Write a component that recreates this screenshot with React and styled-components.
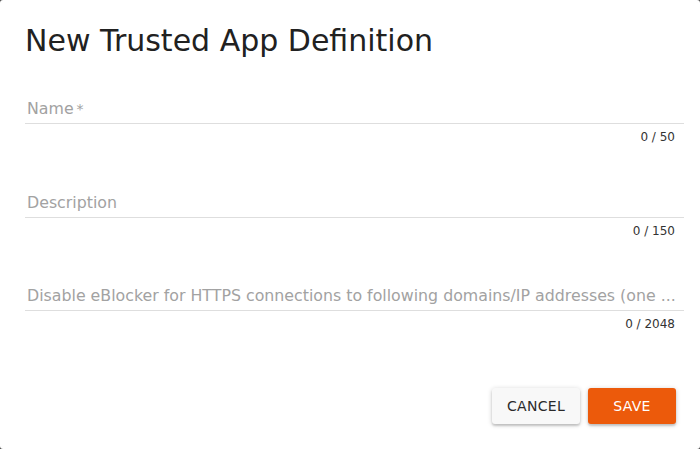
import styled, { createGlobalStyle } from "styled-components";

const GlobalStyle = createGlobalStyle`
  html, body {
    margin: 0;
    padding: 0;
    background: #4a4a4a;
  }
  body {
    font-family: "DejaVu Sans", sans-serif;
  }
`;

const fields = [
  { label: "Name", required: true, max: 50 },
  { label: "Description", max: 150 },
  {
    label:
      "Disable eBlocker for HTTPS connections to following domains/IP addresses (one ...",
    max: 2048,
  },
];

const App = () => (
  <>
    <GlobalStyle />
    <Dialog>
      <Title>New Trusted App Definition</Title>
      <Form>
        {fields.map((field) => (
          <Field key={field.max}>
            <Label>
              {field.label}
              {field.required && <Star>*</Star>}
            </Label>
            <Counter>0 / {field.max}</Counter>
          </Field>
        ))}
      </Form>
      <Actions>
        <Button>CANCEL</Button>
        <Button $primary>SAVE</Button>
      </Actions>
    </Dialog>
  </>
);

export default App;

const Dialog = styled.div`
  box-sizing: border-box;
  width: 700px;
  height: 449px;
  background: #ffffff;
  border-radius: 3px;
  padding: 0 16px 0 25px;
  display: flex;
  flex-direction: column;
`;

const Title = styled.h2`
  margin: 0;
  padding-top: 21px;
  font-size: 30px;
  font-weight: 400;
  line-height: 40px;
  color: #212121;
`;

const Form = styled.div`
  display: flex;
  flex-direction: column;
  gap: 47.5px;
  margin-top: 38px;
`;

const Field = styled.div`
  display: flex;
  flex-direction: column;
`;

const Label = styled.div`
  font-size: 15.8px;
  line-height: 20px;
  color: #a2a2a2;
  padding: 0 0 4px 2px;
  border-bottom: 1px solid #dedede;
  white-space: nowrap;
`;

const Star = styled.span`
  margin-left: 3px;
  font-size: 14px;
`;

const Counter = styled.div`
  align-self: flex-end;
  margin: 5px 9px 0 0;
  font-size: 12px;
  line-height: 16px;
  color: #333333;
`;

const Actions = styled.div`
  display: flex;
  justify-content: flex-end;
  gap: 8px;
  margin-top: auto;
  margin-bottom: 25px;
  padding-right: 8px;
`;

const Button = styled.button`
  width: 88px;
  height: 36px;
  border: none;
  border-radius: 3px;
  font-family: "DejaVu Sans", sans-serif;
  font-size: 14px;
  letter-spacing: 0.3px;
  color: ${(p) => (p.$primary ? "#ffffff" : "#2a2a2a")};
  background: ${(p) => (p.$primary ? "#ec5a0b" : "#f8f8f8")};
  box-shadow: 0 1px 5px rgba(0, 0, 0, 0.2), 0 2px 2px rgba(0, 0, 0, 0.14);
`;
